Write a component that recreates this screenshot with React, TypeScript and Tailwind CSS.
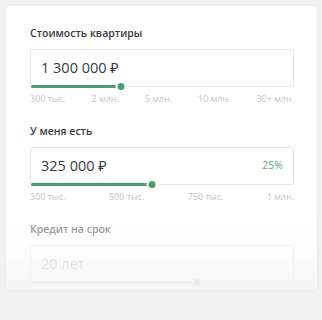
import React from "react";

type Field = {
  label: string;
  value: string;
  suffix?: string;
  percent: number;
  ticks: string[];
  muted?: boolean;
};

const fields: Field[] = [
  {
    label: "Стоимость квартиры",
    value: "1 300 000 ₽",
    percent: 34.5,
    ticks: ["300 тыс.", "2 млн.", "5 млн.", "10 млн.", "30+ млн."],
  },
  {
    label: "У меня есть",
    value: "325 000 ₽",
    suffix: "25%",
    percent: 46,
    ticks: ["300 тыс.", "500 тыс.", "750 тыс.", "1 млн."],
  },
  {
    label: "Кредит на срок",
    value: "20 лет",
    percent: 63.5,
    ticks: ["\u00a0"],
    muted: true,
  },
];

function SliderField({ field }: { field: Field }) {
  const green = field.muted ? "bg-[#d9e6de]" : "bg-[#4f9a6f]";
  return (
    <div className="flex flex-col">
      <div
        className={`text-[10.5px] font-semibold leading-[14px] ${
          field.muted ? "text-[#8f8f8f]" : "text-[#3a3a3a]"
        }`}
      >
        {field.label}
      </div>
      <div
        className={`relative mt-[9px] h-[38px] rounded-[3px] border bg-white ${
          field.muted ? "border-[#f0f0f0]" : "border-[#e4e6e5]"
        }`}
      >
        <div className="flex h-full items-center justify-between pl-[10px] pr-[10px]">
          <span
            className={`text-[14.5px] leading-none ${
              field.muted ? "text-[#c8c8c8]" : "text-[#3a3a3a]"
            }`}
          >
            {field.value}
          </span>
          {field.suffix && (
            <span className="text-[10.5px] text-[#5ea57c]">{field.suffix}</span>
          )}
        </div>
        <div
          className={`absolute -bottom-[2px] left-0 h-[3px] rounded-full ${green}`}
          style={{ width: `${field.percent}%` }}
        />
        <div
          className={`absolute -bottom-[6px] h-[11px] w-[11px] -translate-x-1/2 rounded-full border-2 border-white ${
            field.muted ? "bg-[#d6d6d6]" : "bg-[#4f9a6f]"
          }`}
          style={{ left: `${field.percent}%` }}
        />
      </div>
      <div className="mt-[7px] flex justify-between text-[9px] leading-[10px] text-[#c6c6c6]">
        {field.ticks.map((t, i) => (
          <span key={i}>{t}</span>
        ))}
      </div>
    </div>
  );
}

export default function App() {
  return (
    <div
      className="h-[320px] w-[322px] overflow-hidden bg-[#f2f2f2] pl-[6px] pt-[6px]"
      style={{ fontFamily: '"Open Sans", "Noto Sans", sans-serif' }}
    >
      <div className="relative h-[284px] w-[311px] overflow-hidden rounded-[4px] bg-white pl-[24px] pr-[23px] pt-[20px] shadow-[0_0_4px_rgba(0,0,0,0.06)]">
        <div className="flex flex-col gap-[20px]">
          {fields.map((f) => (
            <SliderField key={f.label} field={f} />
          ))}
        </div>
        <div className="pointer-events-none absolute inset-x-0 bottom-0 h-[70px] bg-gradient-to-b from-white/0 via-[#f8f8f8]/40 to-[#f3f3f3]/90" />
      </div>
    </div>
  );
}
